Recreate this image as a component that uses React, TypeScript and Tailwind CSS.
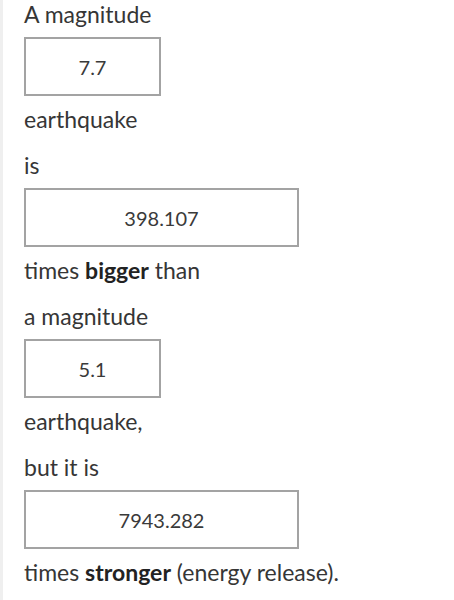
import React from "react";

function Line({ children, className = "" }: { children: React.ReactNode; className?: string }) {
  return (
    <div className={`h-[28px] leading-[28px] text-[23px] text-[#363636] whitespace-nowrap ${className}`}>
      {children}
    </div>
  );
}

function Box({ value, wide }: { value: string; wide?: boolean }) {
  return (
    <div
      className={`my-[9px] h-[59px] ${wide ? "w-[275px]" : "w-[137px]"} border-2 border-[#a3a3a3] flex items-center justify-center text-[20px] text-[#3a3a3a]`}
    >
      {value}
    </div>
  );
}

export default function App() {
  return (
    <div
      className="min-h-[600px] w-[454px] bg-white border-l-[3px] border-[#efefef] pl-[21px]"
      style={{ fontFamily: "Lato, 'Liberation Sans', sans-serif" }}
    >
      <div className="flex flex-col">
        <Line>A magnitude</Line>
        <Box value="7.7" />
        <Line>earthquake</Line>
        <Line className="mt-[18px]">is</Line>
        <Box value="398.107" wide />
        <Line>
          times <b className="font-bold text-[#222222]">bigger</b> than
        </Line>
        <Line className="mt-[18px]">a magnitude</Line>
        <Box value="5.1" />
        <Line>earthquake,</Line>
        <Line className="mt-[18px]">but it is</Line>
        <Box value="7943.282" wide />
        <Line>
          times <b className="font-bold text-[#222222]">stronger</b> (energy release).
        </Line>
      </div>
    </div>
  );
}
